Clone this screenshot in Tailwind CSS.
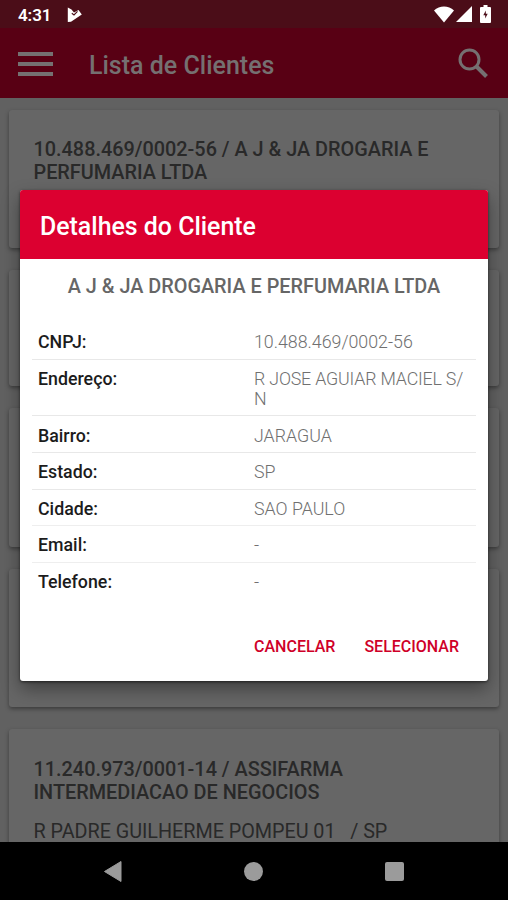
<!DOCTYPE html>
<html lang="pt-BR">
<head>
<meta charset="utf-8">
<title>Lista de Clientes</title>
<script src="https://cdn.jsdelivr.net/npm/@tailwindcss/browser@4"></script>
</head>
<body class="bg-black font-[Roboto,sans-serif]">
<div class="relative flex h-[900px] w-[508px] flex-col overflow-hidden bg-[#616161]">
  <!-- Status bar -->
  <div class="flex h-7 shrink-0 items-center bg-[#4b0d18] pr-[17px] pl-[18px] text-white">
    <span class="pt-[3px] text-[17px] font-semibold leading-none tracking-[-0.1px]">4:31</span>
    <svg class="mt-[2px] ml-[16px] h-4 w-[15px]" viewBox="0 0 15 16"><path fill="currentColor" d="M.8.500 4.500 2.500 7 5.500 11.500 3 14.800 7.500 4 14.800.8 15Z"/><path d="M4.800 6.200 7 8 10.500 4.300" fill="none" stroke="#4b0d18" stroke-width="1.100"/></svg>
    <div class="ml-auto flex items-center">
      <svg class="h-[17px] w-5" viewBox="0 0 20 17"><path fill="currentColor" d="M0 4.500C5.500-.7 14.500-.7 20 4.500L10 16.500Z"/></svg>
      <svg class="ml-[2px] h-4 w-4" viewBox="0 0 16 16"><path fill="currentColor" d="M16 0V16H0Z"/></svg>
      <svg class="ml-2 h-[18px] w-[11px]" viewBox="0 0 11 18"><path fill="currentColor" d="M3.500 0h4v2H10a1 1 0 0 1 1 1v14a1 1 0 0 1-1 1H1a1 1 0 0 1-1-1V3a1 1 0 0 1 1-1h2.500Z"/><path fill="#4b0d18" d="M5.800 5.500 3.300 10.300h1.900V13.500l2.500-4.700H5.800Z"/></svg>
    </div>
  </div>
  <!-- App bar -->
  <header class="flex h-[70px] shrink-0 items-center bg-[#580014] pr-5 pl-[18px] text-[#757071]">
    <div class="flex w-[35px] flex-col gap-[6px] pt-px">
      <div class="h-1 bg-current"></div><div class="h-1 bg-current"></div><div class="h-1 bg-current"></div>
    </div>
    <h1 class="ml-9 pt-[5px] text-[25px] font-medium leading-none whitespace-nowrap">Lista de Clientes</h1>
    <svg class="ml-auto h-[30px] w-[30px]" viewBox="0 0 30 30" fill="none" stroke="currentColor"><circle cx="11.500" cy="11.500" r="9.500" stroke-width="3"/><path d="m18.500 18.500 10 10" stroke-width="4"/></svg>
  </header>
  <!-- Client list -->
  <main class="flex min-h-0 flex-1 flex-col gap-[22px] overflow-hidden px-[9px] pt-3 text-[#292929]">
    <section class="h-[138px] shrink-0 rounded-[3px] bg-[#666] px-[24.5px] pt-[28px] shadow-[0_2px_4px_#00000060]">
      <h2 class="text-[19.85px] font-medium leading-[23px] whitespace-nowrap">10.488.469/0002-56 / A J &amp; JA DROGARIA E<br>PERFUMARIA LTDA</h2>
    </section>
    <section class="h-[116px] shrink-0 rounded-[3px] bg-[#666] shadow-[0_2px_4px_#00000060]"></section>
    <section class="h-[139px] shrink-0 rounded-[3px] bg-[#666] shadow-[0_2px_4px_#00000060]"></section>
    <section class="h-[138px] shrink-0 rounded-[3px] bg-[#666] shadow-[0_2px_4px_#00000060]"></section>
    <section class="h-[138px] shrink-0 rounded-[3px] bg-[#666] px-[24.5px] pt-[29px] shadow-[0_2px_4px_#00000060]">
      <h2 class="text-[19.85px] font-medium leading-[23px] whitespace-nowrap">11.240.973/0001-14 / ASSIFARMA<br>INTERMEDIACAO DE NEGOCIOS</h2>
      <p class="mt-4 text-[19.8px] leading-[23px] tracking-[-0.03px] whitespace-pre">R PADRE GUILHERME POMPEU 01   / SP</p>
    </section>
  </main>
  <!-- Navigation bar -->
  <nav class="flex h-[58px] shrink-0 items-center bg-black pl-[103px] text-[#9b9b9b]">
    <svg class="h-[21px] w-[19px]" viewBox="0 0 19 21"><path fill="currentColor" d="M18 .5V20.500L1.500 10.500Z" stroke="currentColor" stroke-linejoin="round"/></svg>
    <div class="ml-[122px] h-[19px] w-[19px] rounded-full bg-current"></div>
    <div class="ml-[122px] h-[19px] w-[19px] rounded-[2px] bg-current"></div>
  </nav>
  <!-- Client details dialog -->
  <div role="dialog" class="absolute top-[190px] left-5 flex h-[491px] w-[468px] flex-col overflow-hidden rounded-[3px] bg-white shadow-[0_8px_18px_#00000060,0_1px_3px_#00000090]">
    <div class="flex h-[69px] shrink-0 items-center bg-[#dc0030] px-5 pt-[6px] text-[24.9px] font-medium leading-none text-white"><span class="whitespace-nowrap">Detalhes do Cliente</span></div>
    <h3 class="pt-[16px] text-center text-[19.85px] font-medium leading-6 whitespace-nowrap text-[#666]">A J &amp; JA DROGARIA E PERFUMARIA LTDA</h3>
    <dl class="mx-3 mt-[25px] text-[17.8px] leading-5 text-[#707070]">
      <div class="flex h-[36px] border-b border-[#e8e8e8] pt-[8px] pl-[6px]"><dt class="w-[216px] font-medium text-[#1c1c1c]">CNPJ:</dt><dd class="font-light whitespace-nowrap">10.488.469/0002-56</dd></div>
      <div class="flex h-[56px] border-b border-[#e8e8e8] pt-[9px] pl-[6px]"><dt class="w-[216px] font-medium text-[#1c1c1c]">Endereço:</dt><dd class="font-light tracking-[-0.18px] whitespace-nowrap">R JOSE AGUIAR MACIEL S/<br>N</dd></div>
      <div class="flex h-[37px] border-b border-[#e8e8e8] pt-[10px] pl-[6px]"><dt class="w-[216px] font-medium text-[#1c1c1c]">Bairro:</dt><dd class="font-light whitespace-nowrap">JARAGUA</dd></div>
      <div class="flex h-[37px] border-b border-[#e8e8e8] pt-[9px] pl-[6px]"><dt class="w-[216px] font-medium text-[#1c1c1c]">Estado:</dt><dd class="font-light whitespace-nowrap">SP</dd></div>
      <div class="flex h-[36px] border-b border-[#eee] pt-[9px] pl-[6px]"><dt class="w-[216px] font-medium text-[#1c1c1c]">Cidade:</dt><dd class="font-light whitespace-nowrap">SAO PAULO</dd></div>
      <div class="flex h-[37px] border-b border-[#eee] pt-[9px] pl-[6px]"><dt class="w-[216px] font-medium text-[#1c1c1c]">Email:</dt><dd class="font-light">-</dd></div>
      <div class="flex h-[37px] pt-[9px] pl-[6px]"><dt class="w-[216px] font-medium text-[#1c1c1c]">Telefone:</dt><dd class="font-light">-</dd></div>
    </dl>
    <div class="mt-auto flex justify-end gap-[29px] pr-[29px] pb-[24px] text-[16px] font-medium leading-5 text-[#cf0028]">
      <button class="whitespace-nowrap">CANCELAR</button><button class="whitespace-nowrap">SELECIONAR</button>
    </div>
  </div>
</div>
</body>
</html>
